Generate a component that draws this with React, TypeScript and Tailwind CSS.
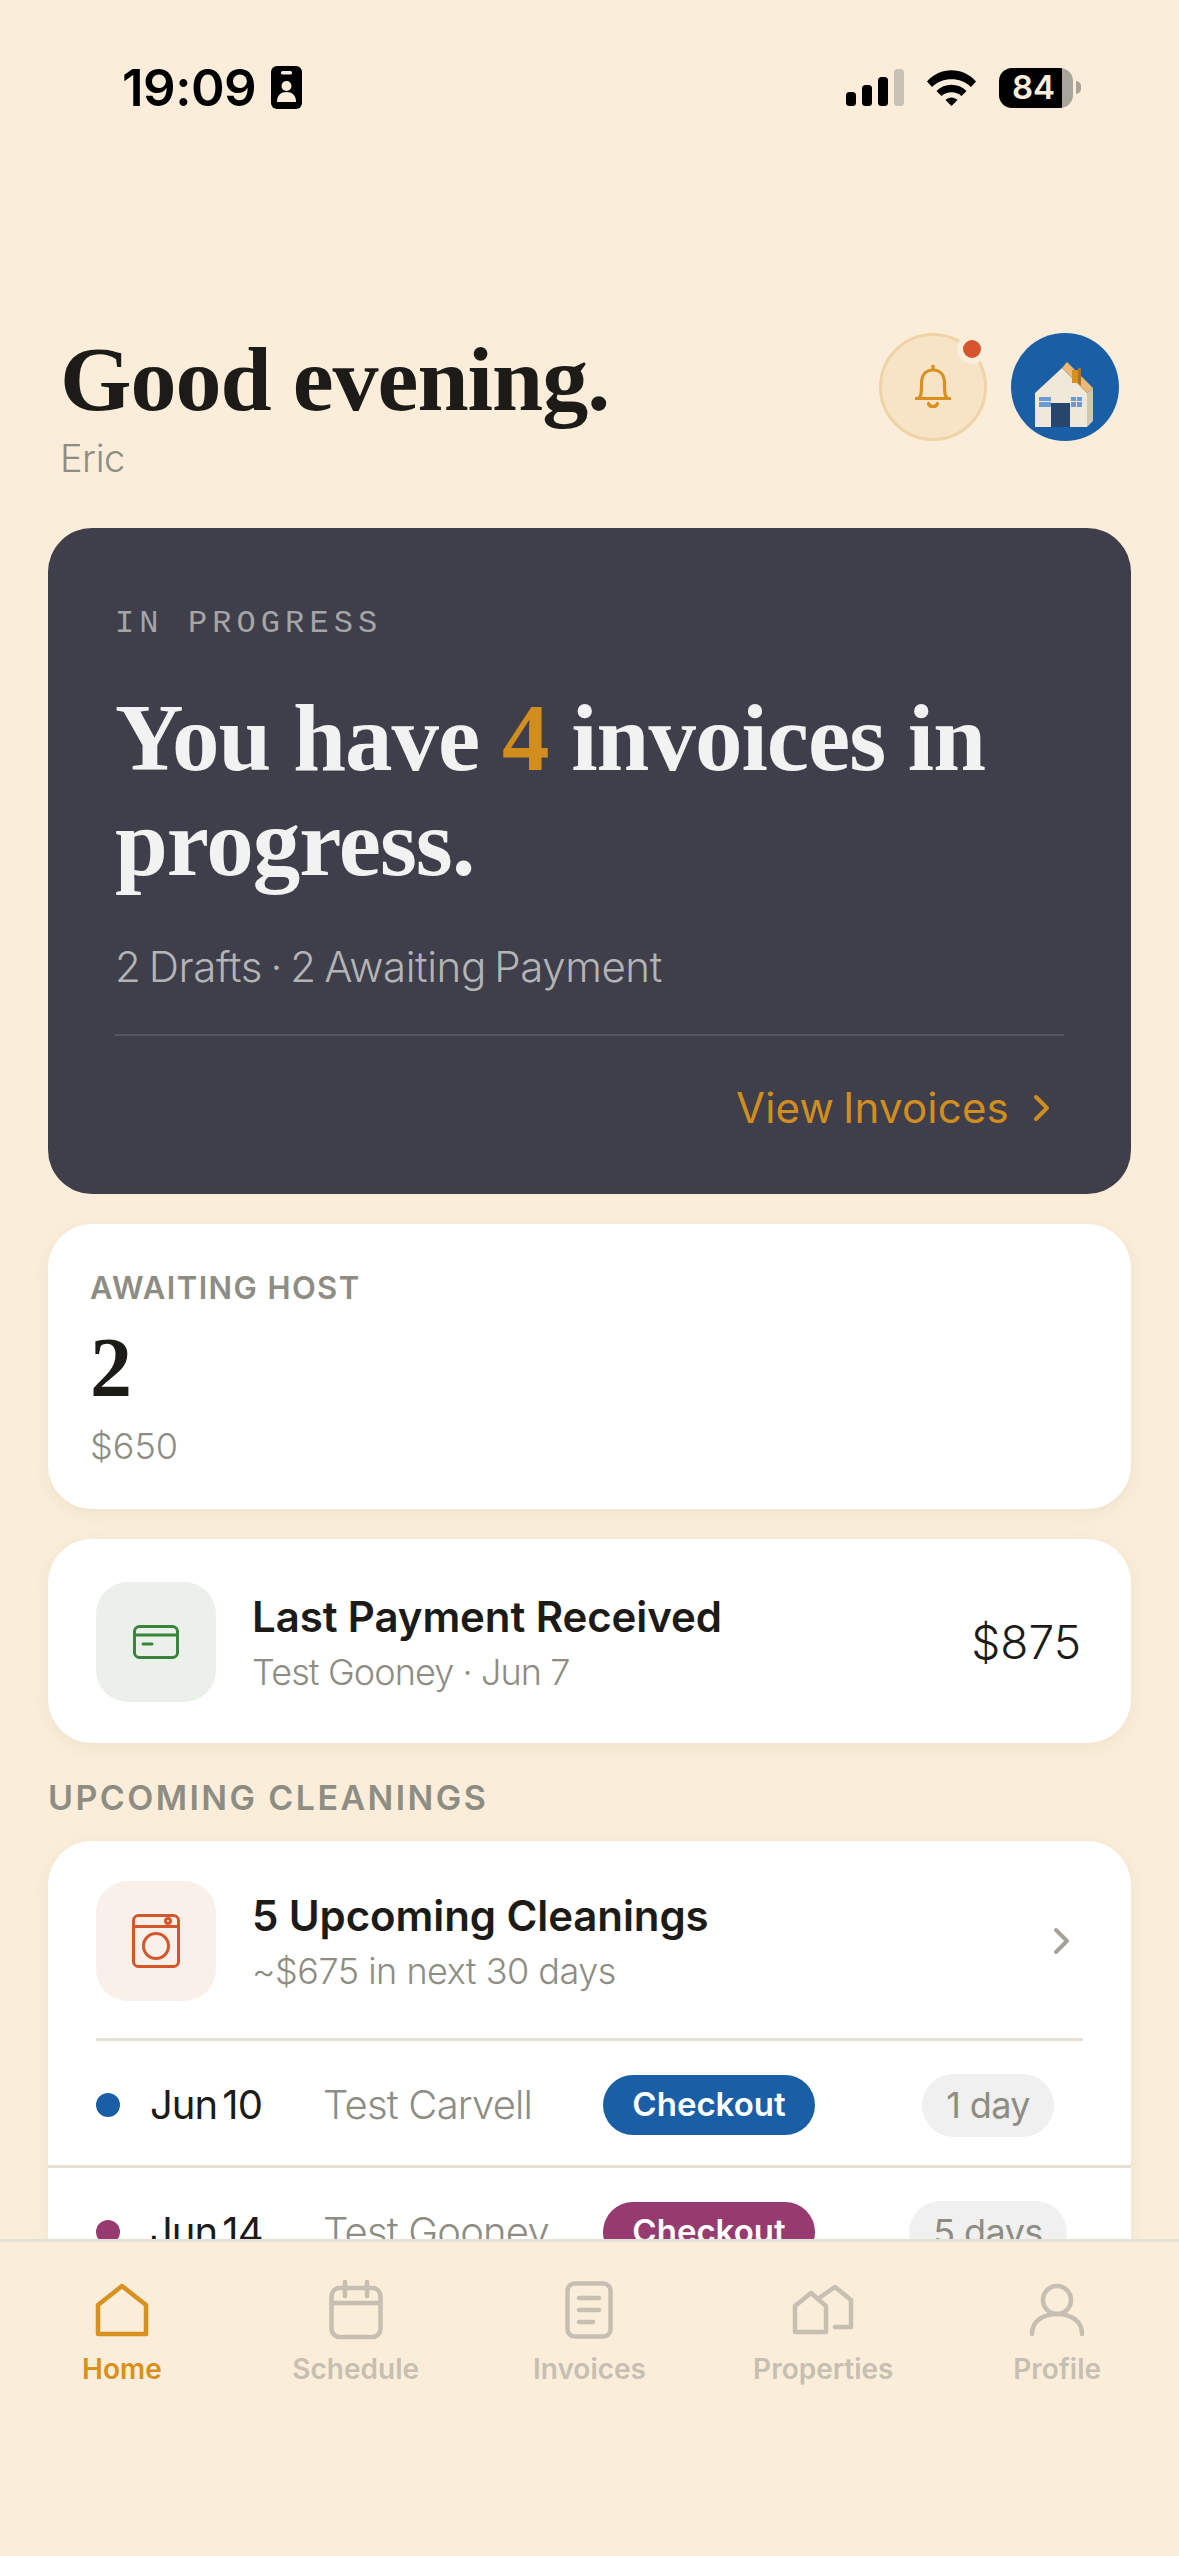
const SANS = "font-['Inter','Liberation_Sans',sans-serif]";
const SERIF = "font-['Liberation_Serif',serif]";

function IdBadge() {
  return (
    <svg width="31" height="43" viewBox="0 0 31 43" className="ml-[15px]">
      <rect width="31" height="43" rx="6" fill="#000" />
      <rect x="10" y="5" width="11" height="3.5" rx="1.5" fill="#faeeda" />
      <circle cx="15.5" cy="20" r="5" fill="#faeeda" />
      <path d="M6 36c0-7 4-10 9.5-10S25 29 25 36z" fill="#faeeda" />
    </svg>
  );
}

function StatusIcons() {
  return (
    <div className="flex items-center">
      <svg width="58" height="37" viewBox="0 0 58 37">
        <rect x="0" y="23" width="10" height="14" rx="3.5" fill="#000" />
        <rect x="16" y="16" width="10" height="21" rx="3.5" fill="#000" />
        <rect x="32" y="8" width="10" height="29" rx="3.5" fill="#000" />
        <rect x="48" y="0" width="10" height="37" rx="3.5" fill="#c9c1b4" />
      </svg>
      <svg width="51" height="37" viewBox="0 0 51 37" className="ml-[22px]">
        <path d="M1 12.5C14 -2.5 37 -2.5 50 12.5L45 18C35 7.5 16 7.5 6 18z" fill="#000" />
        <path d="M10.5 22C18.5 13.5 32.5 13.5 40.5 22L35.5 27C30 22 21 22 15.5 27z" fill="#000" />
        <path d="M19.5 31C23 27.5 28 27.5 31.5 31L25.5 37z" fill="#000" />
      </svg>
      <div className="ml-[22px] flex h-[40px] w-[74px] items-center rounded-[13px] bg-[linear-gradient(90deg,#000_85%,#a9a59c_85%)] pl-[13px]">
        <span className="text-[33px] leading-none font-semibold text-[#faeeda]">84</span>
      </div>
      <div className="ml-[3px] h-[13px] w-[5px] rounded-r-full bg-[#a9a59c]" />
    </div>
  );
}

function BellIcon() {
  return (
    <svg width="38" height="44" viewBox="0 0 38 44" fill="none" stroke="#d8901f" strokeWidth="3.2">
      <path d="M19 0v5" />
      <path d="M1 33.5h36M5 33.5c2-3 2.5-5 2.5-15C7.500 10 12 5 19 5s11.500 5 11.500 13.500c0 10 .5 12 2.500 15" strokeLinejoin="round" />
      <path d="M14.500 38.500c1 4 8 4 9 0" strokeLinecap="round" />
    </svg>
  );
}

function HouseAvatar() {
  return (
    <svg width="108" height="108" viewBox="0 0 108 108" className="shrink-0">
      <circle cx="54" cy="54" r="54" fill="#1a5fa5" />
      <path d="M76 60l6-5v33l-6 6z" fill="#cfc7b5" />
      <path d="M24 60L51 35l25 25v34H24z" fill="#f0e8d8" />
      <path d="M51 35l5-6 26 26-6 5z" fill="#ecb974" />
      <rect x="61" y="37" width="6" height="13" fill="#d89020" />
      <path d="M67 35h3v18l-3-3z" fill="#a8742a" />
      <rect x="40" y="70" width="19" height="24" fill="#28466b" />
      <rect x="28" y="64" width="12" height="10" fill="#6a9bd6" />
      <rect x="60" y="64" width="11" height="10" fill="#6a9bd6" />
      <path d="M28 68.500h12M65.500 64v10M60 68.500h11" stroke="#f0e8d8" strokeWidth="1" />
    </svg>
  );
}

function CardIcon() {
  return (
    <svg width="46" height="34" viewBox="0 0 46 34" fill="none" stroke="#3a833c" strokeWidth="3">
      <rect x="1.500" y="1.500" width="43" height="31" rx="5" />
      <path d="M1.500 10h43" />
      <path d="M10 19h9" strokeLinecap="round" />
    </svg>
  );
}

function WasherIcon() {
  return (
    <svg width="48" height="54" viewBox="0 0 48 54" fill="none" stroke="#d4562d" strokeWidth="3">
      <rect x="1.500" y="1.500" width="45" height="51" rx="5" />
      <path d="M1.500 12.500h45" />
      <circle cx="36" cy="7" r="2.500" />
      <circle cx="24" cy="32" r="12.500" />
    </svg>
  );
}

function Chevron({ color, className }: { color: string; className?: string }) {
  return (
    <svg width="18" height="28" viewBox="0 0 18 28" fill="none" stroke={color} strokeWidth="4" strokeLinecap="round" strokeLinejoin="round" className={className}>
      <path d="M3 3l11 11L3 25" />
    </svg>
  );
}

function HomeTab({ color }: { color: string }) {
  return (
    <svg width="56" height="54" viewBox="0 0 56 54" fill="none" stroke={color} strokeWidth="4.500" strokeLinejoin="round">
      <path d="M28 3L52 22v29H4V22z" />
    </svg>
  );
}

function ScheduleTab({ color }: { color: string }) {
  return (
    <svg width="54" height="60" viewBox="0 0 54 60" fill="none" stroke={color} strokeWidth="4.500" strokeLinecap="round">
      <rect x="2.500" y="8" width="49" height="49" rx="8" />
      <path d="M2.500 23h49M16 2v14M38 2v14" />
    </svg>
  );
}

function InvoiceTab({ color }: { color: string }) {
  return (
    <svg width="48" height="58" viewBox="0 0 48 58" fill="none" stroke={color} strokeWidth="4.500" strokeLinecap="round">
      <rect x="2.500" y="2.500" width="43" height="53" rx="7" />
      <path d="M14 17h20M14 29h20M14 41h14" />
    </svg>
  );
}

function PropertiesTab({ color }: { color: string }) {
  return (
    <svg width="62" height="50" viewBox="0 0 62 50" fill="none" stroke={color} strokeWidth="4.500" strokeLinecap="round" strokeLinejoin="round">
      <path d="M3 21L19 8l15 13v26H3z" />
      <path d="M27 13L43 2l16 13v27H43" />
    </svg>
  );
}

function ProfileTab({ color }: { color: string }) {
  return (
    <svg width="56" height="54" viewBox="0 0 56 54" fill="none" stroke={color} strokeWidth="4.500" strokeLinecap="round">
      <circle cx="28" cy="17" r="14" />
      <path d="M3 51c0-13 11-20 25-20s25 7 25 20" />
    </svg>
  );
}

const TABS = [
  { label: "Home", Icon: HomeTab, active: true },
  { label: "Schedule", Icon: ScheduleTab, active: false },
  { label: "Invoices", Icon: InvoiceTab, active: false },
  { label: "Properties", Icon: PropertiesTab, active: false },
  { label: "Profile", Icon: ProfileTab, active: false },
];

const ROWS = [
  { date: "Jun 10", name: "Test Carvell", dot: "bg-[#1a5fa5]", pill: "bg-[#1a5fa5]", days: "1 day" },
  { date: "Jun 14", name: "Test Gooney", dot: "bg-[#963a70]", pill: "bg-[#963a70]", days: "5 days" },
];

export default function App() {
  return (
    <div className={`flex h-[2556px] w-[1179px] flex-col overflow-hidden bg-[#faeeda] ${SANS}`}>
      <main className="min-h-0 flex-1 overflow-hidden">
        <div className="flex h-[66px] items-end" />
        <div className="flex h-[43px] items-center justify-between pr-[98px] pl-[122px]">
          <div className="flex items-center">
            <span className="text-[51px] leading-none font-semibold tracking-[-0.5px] text-black">19:09</span>
            <IdBadge />
          </div>
          <StatusIcons />
        </div>

        <header className="mt-[224px] flex items-start justify-between pr-[60px] pl-[60px]">
          <div>
            <h1 className={`${SERIF} mt-[-4px] text-[92px] leading-[100px] font-bold tracking-[-1px] text-[#1c1b18]`}>Good evening.</h1>
            <p className="mt-[6px] text-[38px] leading-[46px] font-light tracking-[-0.5px] text-[#8e8d83]">Eric</p>
          </div>
          <div className="flex gap-[24px]">
            <div className="relative flex h-[108px] w-[108px] items-center justify-center rounded-full border-[3px] border-[#f0d4a8] bg-[#f7e4c6]">
              <BellIcon />
              <span className="absolute top-[-2px] right-[-3px] h-[30px] w-[30px] rounded-full border-[6px] border-[#faeeda] bg-[#d4552e]" />
            </div>
            <HouseAvatar />
          </div>
        </header>

        <div className="flex flex-col px-[48px]">
          <section className="mt-[47px] h-[666px] rounded-[44px] bg-[#3e3f4a] px-[67px] pt-[78px]">
            <p className="font-['Liberation_Mono',monospace] text-[32px] leading-[36px] tracking-[5.100px] text-[#a5a5a8]">IN PROGRESS</p>
            <h2 className={`${SERIF} mt-[44px] text-[95px] leading-[105px] font-bold tracking-[-1px] text-[#f2f2f2]`}>
              You have <span className="text-[#d18e1e]">4</span> invoices in progress.
            </h2>
            <p className="mt-[46px] text-[42px] leading-[50px] font-light tracking-[-0.4px] [word-spacing:-3px] text-[#b4b4b6]">2 Drafts · 2 Awaiting Payment</p>
            <div className="mt-[42px] h-[2px] bg-[#55565f]" />
            <div className="mt-[47px] flex items-center justify-end gap-[24px] pr-[13px]">
              <span className="text-[42px] leading-[50px] font-normal tracking-[0.2px] [word-spacing:-3px] text-[#d18e1e]">View Invoices</span>
              <Chevron color="#d18e1e" />
            </div>
          </section>

          <section className="mt-[30px] h-[285px] rounded-[44px] bg-white pt-[46px] pl-[42px] shadow-[0_4px_16px_rgba(120,90,40,0.08)]">
            <p className="text-[31px] leading-[36px] font-semibold tracking-[1.400px] text-[#8e8d83]">AWAITING HOST</p>
            <p className={`${SERIF} mt-[22px] text-[84px] leading-[80px] font-bold text-[#1c1b18]`}>2</p>
            <p className="mt-[16px] text-[36px] leading-[44px] font-light text-[#8e8d83]">$650</p>
          </section>

          <section className="mt-[30px] flex h-[204px] items-center rounded-[44px] bg-white pt-[2px] pr-[50px] pl-[48px] shadow-[0_4px_16px_rgba(120,90,40,0.08)]">
            <div className="flex h-[120px] w-[120px] shrink-0 items-center justify-center rounded-[32px] bg-[#ebf1ea]">
              <CardIcon />
            </div>
            <div className="ml-[36px] flex-1 pt-[3px]">
              <p className="text-[42px] leading-[54px] font-semibold tracking-[-0.1px] text-[#1c1b18]">Last Payment Received</p>
              <p className="mt-[3px] text-[36px] leading-[50px] font-light tracking-[-0.9px] text-[#8e8d83]">Test Gooney · Jun 7</p>
            </div>
            <span className="text-[46px] leading-none font-light text-[#1c1b18]">$875</span>
          </section>

          <p className="mt-[34px] text-[34px] leading-[42px] font-semibold tracking-[2.400px] text-[#8e8d83]">UPCOMING CLEANINGS</p>

          <section className="mt-[22px] h-[500px] rounded-[44px] bg-white shadow-[0_4px_16px_rgba(120,90,40,0.08)]">
            <div className="mx-[48px] flex h-[200px] items-center border-b-[3px] border-[#e5e1d6] pt-[2px]">
              <div className="flex h-[120px] w-[120px] shrink-0 items-center justify-center rounded-[32px] bg-[#faf0ea]">
                <WasherIcon />
              </div>
              <div className="ml-[36px] flex-1 pt-[2px]">
                <p className="text-[42px] leading-[54px] font-semibold tracking-[-0.1px] text-[#1c1b18]">5 Upcoming Cleanings</p>
                <p className="mt-[4px] text-[36px] leading-[48px] font-light tracking-[-0.5px] text-[#8e8d83]">~$675 in next 30 days</p>
              </div>
              <Chevron color="#a5a398" className="mr-[12px]" />
            </div>
            {ROWS.map((row) => (
              <div key={row.date} className="flex h-[127px] items-center border-b-[3px] border-[#e5e1d6] pt-[4px] pl-[48px]">
                <span className={`h-[24px] w-[24px] shrink-0 rounded-full ${row.dot}`} />
                <span className="ml-[30px] w-[173px] shrink-0 text-[40px] font-normal tracking-[-1px] [word-spacing:-5px] text-[#1c1b18]">{row.date}</span>
                <span className="w-[280px] shrink-0 text-[40px] font-light tracking-[-0.8px] text-[#8e8d83]">{row.name}</span>
                <span className={`flex h-[60px] w-[212px] shrink-0 items-center justify-center rounded-full text-[33px] font-semibold text-white ${row.pill}`}>Checkout</span>
                <div className="flex flex-1 justify-center pl-[30px]">
                  <span className="flex h-[63px] items-center rounded-full bg-[#f0f0f0] px-[24px] text-[36px] font-normal tracking-[-0.6px] text-[#8e8d83]">{row.days}</span>
                </div>
              </div>
            ))}
          </section>
        </div>
      </main>

      <nav className="flex h-[317px] shrink-0 items-start border-t-[3px] border-[#e5e1d6] bg-[#faeeda] px-[5px] pt-[37px]">
        {TABS.map(({ label, Icon, active }) => {
          const color = active ? "#d8901f" : "#c7bfb1";
          return (
            <div key={label} className="flex flex-1 flex-col items-center">
              <div className="flex h-[62px] items-center justify-center">
                <Icon color={color} />
              </div>
              <span className={`mt-[11px] text-[28px] leading-[34px] font-semibold ${active ? "text-[#d8901f]" : "text-[#c7bfb1]"}`}>{label}</span>
            </div>
          );
        })}
      </nav>
    </div>
  );
}
